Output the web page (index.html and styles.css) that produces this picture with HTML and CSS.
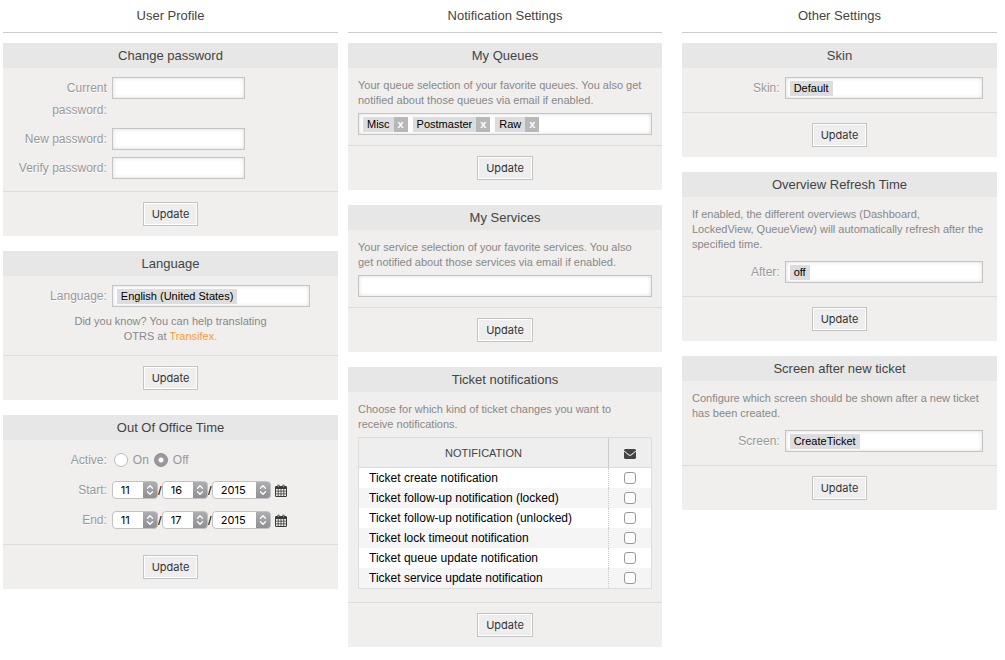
FILE: index.html
```html
<!DOCTYPE html>
<html lang="en">
<head>
<meta charset="utf-8">
<meta name="viewport" content="width=device-width, initial-scale=1">
<title>Preferences</title>
<link rel="stylesheet" href="styles.css">
</head>
<body>
<svg class="sprite" aria-hidden="true">
  <symbol id="calendar" viewBox="0 0 12 13">
    <path fill="#3a3a3a" d="M1 2h1.500V.8h2V2h3V.8h2V2H11l1 .8V12l-.8 1H.8L0 12V2.800zM1 5v1.800h1.800V5zm2.600 0v1.800h2V5zm2.800 0v1.800h2V5zm2.800 0v1.800H11V5zM1 7.600v1.800h1.800V7.600zm2.600 0v1.800h2V7.600zm2.800 0v1.800h2V7.600zm2.800 0v1.800H11V7.600zM1 10.200V12h1.800v-1.800zm2.600 0V12h2v-1.800zm2.800 0V12h2v-1.800zm2.800 0V12H11v-1.800z" fill-rule="evenodd"/>
    <path stroke="#bbb" stroke-width=".6" d="M3.500 1.200v2M8.500 1.200v2"/>
  </symbol>
  <symbol id="arrows" viewBox="0 0 8 12">
    <path fill="none" stroke="#fff" stroke-width="1.300" stroke-linecap="round" stroke-linejoin="round" d="M1.500 4.300 4 1.800l2.500 2.500M1.500 7.700 4 10.200l2.500-2.500"/>
  </symbol>
</svg>
<main class="preferences">
  <section class="column">
    <h1 class="column-title">User Profile</h1>
    <form class="card">
      <h2 class="card-title">Change password</h2>
      <div class="card-body card-body-wrapped">
        <div class="field"><label class="label" for="cur">Current password:</label><input class="box box-short" id="cur" type="password"></div>
        <div class="field"><label class="label" for="new">New password:</label><input class="box box-short" id="new" type="password"></div>
        <div class="field"><label class="label" for="ver">Verify password:</label><input class="box box-short" id="ver" type="password"></div>
      </div>
      <div class="card-footer"><button class="button" type="button">Update</button></div>
    </form>
    <form class="card">
      <h2 class="card-title">Language</h2>
      <div class="card-body card-body-hint">
        <div class="field"><label class="label" for="lang">Language:</label><div class="box box-select"><span class="chip">English (United States)</span><input class="search" id="lang" type="text"></div></div>
        <p class="hint">Did you know? You can help translating<br>OTRS at <a class="link" href="#transifex">Transifex</a><span class="link">.</span></p>
      </div>
      <div class="card-footer"><button class="button" type="button">Update</button></div>
    </form>
    <form class="card">
      <h2 class="card-title">Out Of Office Time</h2>
      <div class="card-body card-body-dates">
        <div class="field"><span class="label">Active:</span><div class="radios"><input class="radio" type="radio" name="active" id="on"><label for="on">On</label><input class="radio" type="radio" name="active" id="off" checked><label for="off">Off</label></div></div>
        <div class="field"><span class="label">Start:</span><div class="date">
          <span class="picker"><select aria-label="Start month"><option>11</option></select><svg><use href="#arrows"/></svg></span><span class="slash">/</span>
          <span class="picker"><select aria-label="Start day"><option>16</option></select><svg><use href="#arrows"/></svg></span><span class="slash">/</span>
          <span class="picker picker-year"><select aria-label="Start year"><option>2015</option></select><svg><use href="#arrows"/></svg></span>
          <button class="calendar" type="button" aria-label="Choose start date"><svg><use href="#calendar"/></svg></button>
        </div></div>
        <div class="field"><span class="label">End:</span><div class="date">
          <span class="picker"><select aria-label="End month"><option>11</option></select><svg><use href="#arrows"/></svg></span><span class="slash">/</span>
          <span class="picker"><select aria-label="End day"><option>17</option></select><svg><use href="#arrows"/></svg></span><span class="slash">/</span>
          <span class="picker picker-year"><select aria-label="End year"><option>2015</option></select><svg><use href="#arrows"/></svg></span>
          <button class="calendar" type="button" aria-label="Choose end date"><svg><use href="#calendar"/></svg></button>
        </div></div>
      </div>
      <div class="card-footer"><button class="button" type="button">Update</button></div>
    </form>
  </section>

  <section class="column column-middle">
    <h1 class="column-title">Notification Settings</h1>
    <form class="card">
      <h2 class="card-title">My Queues</h2>
      <div class="card-body card-body-stacked">
        <label class="text" for="queues">Your queue selection of your favorite queues. You also get notified about those queues via email if enabled.</label>
        <div class="box"><span class="chip">Misc</span><button class="remove" type="button" aria-label="Remove Misc">x</button><span class="chip">Postmaster</span><button class="remove" type="button" aria-label="Remove Postmaster">x</button><span class="chip">Raw</span><button class="remove" type="button" aria-label="Remove Raw">x</button><input class="search" id="queues" type="text"></div>
      </div>
      <div class="card-footer"><button class="button" type="button">Update</button></div>
    </form>
    <form class="card">
      <h2 class="card-title">My Services</h2>
      <div class="card-body card-body-stacked">
        <label class="text" for="services">Your service selection of your favorite services. You also get notified about those services via email if enabled.</label>
        <input class="box" id="services" type="text">
      </div>
      <div class="card-footer"><button class="button" type="button">Update</button></div>
    </form>
    <form class="card">
      <h2 class="card-title">Ticket notifications</h2>
      <div class="card-body card-body-table">
        <p class="text">Choose for which kind of ticket changes you want to receive notifications.</p>
        <table class="table">
          <thead><tr><th>NOTIFICATION</th><th class="mail"><svg class="envelope" viewBox="0 0 12 10" role="img" aria-label="Email"><path fill="#444" d="M1 0h10l1 1v.5L7 5.500q-1 .7-2 0L0 1.500V1zM0 2.600l4.500 3.700q1.500 1 3 0L12 2.600V9l-1 1H1L0 9z"/></svg></th></tr></thead>
          <tbody>
            <tr><td><label for="n1">Ticket create notification</label></td><td class="mail"><input class="check" id="n1" type="checkbox"></td></tr>
            <tr><td><label for="n2">Ticket follow-up notification (locked)</label></td><td class="mail"><input class="check" id="n2" type="checkbox"></td></tr>
            <tr><td><label for="n3">Ticket follow-up notification (unlocked)</label></td><td class="mail"><input class="check" id="n3" type="checkbox"></td></tr>
            <tr><td><label for="n4">Ticket lock timeout notification</label></td><td class="mail"><input class="check" id="n4" type="checkbox"></td></tr>
            <tr><td><label for="n5">Ticket queue update notification</label></td><td class="mail"><input class="check" id="n5" type="checkbox"></td></tr>
            <tr><td><label for="n6">Ticket service update notification</label></td><td class="mail"><input class="check" id="n6" type="checkbox"></td></tr>
          </tbody>
        </table>
      </div>
      <div class="card-footer"><button class="button" type="button">Update</button></div>
    </form>
  </section>

  <section class="column">
    <h1 class="column-title">Other Settings</h1>
    <form class="card">
      <h2 class="card-title">Skin</h2>
      <div class="card-body">
        <div class="field"><label class="label" for="skin">Skin:</label><div class="box box-select"><span class="chip">Default</span><input class="search" id="skin" type="text"></div></div>
      </div>
      <div class="card-footer"><button class="button" type="button">Update</button></div>
    </form>
    <form class="card">
      <h2 class="card-title">Overview Refresh Time</h2>
      <div class="card-body card-body-text">
        <p class="text">If enabled, the different overviews (Dashboard,<br>LockedView, QueueView) will automatically refresh after the specified time.</p>
        <div class="field"><label class="label" for="after">After:</label><div class="box box-select"><span class="chip">off</span><input class="search" id="after" type="text"></div></div>
      </div>
      <div class="card-footer"><button class="button" type="button">Update</button></div>
    </form>
    <form class="card">
      <h2 class="card-title">Screen after new ticket</h2>
      <div class="card-body card-body-text">
        <p class="text">Configure which screen should be shown after a new ticket has been created.</p>
        <div class="field"><label class="label" for="screen">Screen:</label><div class="box box-select"><span class="chip">CreateTicket</span><input class="search" id="screen" type="text"></div></div>
      </div>
      <div class="card-footer"><button class="button" type="button">Update</button></div>
    </form>
  </section>
</main>
</body>
</html>
```
FILE: styles.css
```css
* { box-sizing: border-box; }

body {
  margin: 0;
  background: #fff;
  color: #000;
  font-family: "Liberation Sans", Arial, Helvetica, sans-serif;
  font-size: 12px;
}

.sprite { display: none; }

.preferences {
  display: grid;
  grid-template-columns: 335fr 324fr 315fr;
  gap: 10px;
  padding: 0 8px 0 3px;
}

.column {
  display: flex;
  flex-direction: column;
  gap: 15px;
  min-width: 0;
}

.column-middle { margin-right: 10px; }

.column-title {
  margin: 0 0 -5px;
  border-bottom: 1px solid #ccc;
  color: #444;
  font-size: 13px;
  font-weight: normal;
  line-height: 32px;
  text-align: center;
}

.card { background: #f0efee; }

.card-title {
  margin: 0;
  background: #e7e7e7;
  color: #444;
  font-size: 13px;
  font-weight: normal;
  line-height: 25px;
  text-align: center;
}

.card-body {
  display: flex;
  flex-direction: column;
  gap: 7px;
  padding: 9px 0 13px;
}

.card-body-wrapped { padding-bottom: 12px; }
.card-body-hint { padding-bottom: 11px; }
.card-body-dates { gap: 8px; }

.card-body-stacked {
  gap: 5px;
  padding: 10px;
}

.card-body-table {
  gap: 5px;
  padding: 10px 10px 13px;
}

.card-body-stacked .text,
.card-body-table .text { padding-right: 6px; }

.card-body-text {
  gap: 9px;
  padding-top: 10px;
}

.card-body-text .text { padding: 0 10px; }

.card-footer {
  padding: 10px;
  border-top: 1px solid #dcdcdc;
  text-align: center;
}

.field {
  display: flex;
  gap: 5px;
}

.label {
  flex: 0 0 31%;
  padding-left: 10px;
  color: #999;
  line-height: 22px;
  text-align: right;
  text-shadow: 0 1px 0 #fff;
}

.text,
.hint {
  margin: 0;
  color: #888;
  font-size: 11px;
  line-height: 15px;
}

.hint { text-align: center; }

.link {
  color: #ff9b37;
  text-decoration: none;
}

.box {
  display: flex;
  align-items: center;
  width: 100%;
  height: 22px;
  padding: 0 4px;
  border: 1px solid #c4c4c4;
  background: #fff;
  box-shadow: inset 0 0 4px #ddd;
}

.box-short { width: 133px; }
.box-select { width: 198px; }

.chip {
  padding: 0 4px;
  background: #ddd;
  color: #000;
  font-size: 11px;
  line-height: 15px;
  white-space: nowrap;
}

.remove {
  width: 14px;
  height: 15px;
  margin-right: 5px;
  padding: 0;
  border: 0;
  background: #b8b8b8;
  color: #fff;
  font: bold 11px/15px "Liberation Sans", Arial, sans-serif;
}

.search {
  flex: 1;
  min-width: 0;
  padding: 0;
  border: 0;
  outline: 0;
  background: transparent;
}

.button {
  height: 24px;
  padding: 0 8px;
  border: 1px solid #c4c4c4;
  background: #eee;
  box-shadow: inset 0 0 0 1px #fff;
  color: #333;
  font: 11px/22px Inter, Roboto, sans-serif;
  vertical-align: top;
}

.radios {
  display: flex;
  align-items: center;
  gap: 5px;
  padding-left: 2px;
  color: #999;
}

.radio {
  width: 14px;
  height: 14px;
  margin: 0;
  border: 1px solid #bbb;
  border-radius: 50%;
  background: #fff;
  appearance: none;
}

.radio:checked {
  border-color: #8e8e93;
  background: radial-gradient(circle, #fff 2px, #98989d 3px);
}

.date {
  display: flex;
  align-items: center;
}

.picker {
  display: flex;
  position: relative;
  width: 46px;
}

.picker-year { width: 59px; }

.picker select {
  width: 100%;
  height: 18px;
  padding: 0 16px 0 8px;
  border: 1px solid #c2c2c2;
  border-radius: 4px;
  background: linear-gradient(#b0b0b4, #8c8c91) right / 15px 100% no-repeat border-box #fff;
  color: #000;
  font: 11px/16px Inter, Roboto, sans-serif;
  appearance: none;
}

.picker svg {
  position: absolute;
  top: 3px;
  right: 4px;
  width: 8px;
  height: 12px;
  pointer-events: none;
}

.slash {
  width: 4px;
  font-size: 13px;
  text-align: center;
}

.calendar {
  display: flex;
  margin-left: 4px;
  padding: 0;
  border: 0;
  background: none;
}

.calendar svg {
  width: 12px;
  height: 13px;
}

.table {
  width: 100%;
  border: 1px solid #dcdcdc;
  border-collapse: separate;
  border-spacing: 0;
  background: #fff;
}

.table th {
  height: 30px;
  padding: 0;
  border-bottom: 1px solid #dcdcdc;
  background: #eee;
  color: #444;
  font-size: 11px;
  font-weight: normal;
}

.table td {
  height: 20px;
  padding: 0 10px;
  line-height: 20px;
}

.table tr:nth-child(even) td { background: #f5f5f5; }

.table .mail {
  width: 43px;
  padding: 0;
  border-left: 1px dotted #ccc;
  text-align: center;
}

.table th.mail { border-left-style: solid; }

.envelope {
  width: 12px;
  height: 10px;
  vertical-align: middle;
}

.check {
  display: block;
  width: 12px;
  height: 12px;
  margin: 0 auto;
  border: 1px solid #999;
  border-radius: 3px;
  background: #fff;
  appearance: none;
}
```
